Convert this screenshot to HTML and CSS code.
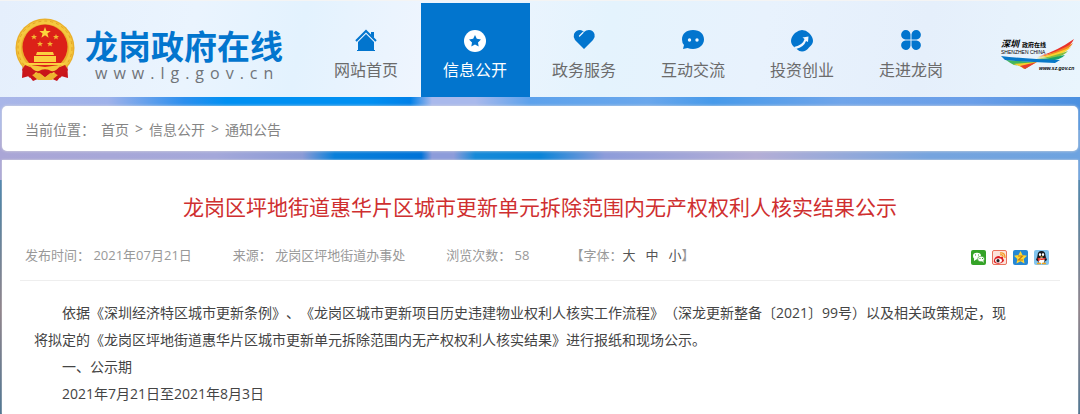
FILE: index.html
```html
<!DOCTYPE html>
<html lang="zh-CN">
  <head>
    <meta charset="UTF-8" />
    <meta name="viewport" content="width=device-width, initial-scale=1.0" />
    <title>龙岗政府在线</title>
    <link rel="stylesheet" href="styles.css">
  </head>
  <body>
    <header class="header">
      <a class="brand" href="#">
        <svg class="emblem" viewBox="0 0 60 64" aria-hidden="true">
          <path d="M8 43 L7 60 L14 58 L18 63 L25 60 L35 60 L42 63 L46 58 L53 60 L52 43 Z" fill="#c8141a" />
          <circle cx="30" cy="30" r="29.500" fill="#eab02c" />
          <circle cx="30" cy="30" r="26" fill="none" stroke="#f5c840" stroke-width="4" />
          <circle cx="30" cy="30" r="27" fill="none" stroke="#e3a224" stroke-width="1" stroke-dasharray="3 3" />
          <circle cx="30" cy="29" r="22.500" fill="#dc2118" />
          <path d="M30 9 l1.500 4 h4.200 l-3.300 2.600 1.200 4.200 -3.600 -2.500 -3.600 2.500 1.200 -4.200 -3.300 -2.600 h4.200z" fill="#fbd43c" />
          <g fill="#f3b832">
            <path id="star" d="M19 16 l.8 2 h2.200 l-1.700 1.400 .6 2.200 -1.900 -1.300 -1.900 1.300 .6 -2.200 -1.700 -1.400 h2.200z" />
            <use href="#star" x="22" />
            <use href="#star" x="6" y="7" />
            <use href="#star" x="16" y="7" />
          </g>
          <path d="M22 34 h16 l1 3 h-18z M19 38 h22 v6 h-22z M10 45 h40 l-2 2 h-36z" fill="#fbd040" />
          <path d="M10 47 q20 9 40 0 l3 5 -8 8 -6 -6 -9 5 -9 -5 -6 6 -8 -8z" fill="#cb171b" />
          <path d="M15 47 q8 1 15 2 q7 -1 15 -2 q-3 7 -9 6 q-6 -4 -12 0 q-6 1 -9 -6z" fill="#f6c63b" />
          <path d="M17 57 l8 -2 5 4 5 -4 8 2 -6 5 h-14z" fill="#edb52f" />
          <path d="M25 55 l5 -3 5 3 -5 4z" fill="#c8141a" />
        </svg>
        <span class="brand-text">
          <strong>龙岗政府在线</strong>
          <span class="domain">www.lg.gov.cn</span>
        </span>
      </a>

      <nav class="nav">
        <a href="#">
          <svg viewBox="0 0 24 24" aria-hidden="true">
            <path d="M2 13 L12 3 L22 13" fill="none" stroke="currentColor" stroke-width="2" />
            <path d="M17 4 h3 v6 l-3 -3z M12 6 L20 14 V22 H21 V23 H3 V22 H4 V14z" />
          </svg>
          网站首页
        </a>
        <a class="active" href="#">
          <svg viewBox="0 0 24 24" aria-hidden="true">
            <circle cx="12" cy="13" r="11" />
            <path d="M12 7 l1.800 3.800 4.200 .6 -3 3 .7 4.200 -3.700 -2 -3.700 2 .7 -4.200 -3 -3 4.200 -.6z" fill="#0275ce" />
          </svg>
          信息公开
        </a>
        <a href="#">
          <svg viewBox="0 0 24 24" aria-hidden="true">
            <path d="M12 21 L3 12 Q1 9 2 6 Q4 2 8 2 Q10 2 12 4 Q14 2 17 2 Q21 2 22.500 6 Q23.500 9 21 12z" />
            <path d="M11 4.500 L7.500 8" stroke="#edf6ff" fill="none" stroke-width="1.300" stroke-linecap="round" />
          </svg>
          政务服务
        </a>
        <a href="#">
          <svg viewBox="0 0 24 24" aria-hidden="true">
            <path d="M12 2 C19 2 23 6 23 11.500 C23 17 18 21 12 21 Q9 21 6.500 20 L2 21 L3 17 Q1 15 1 11.500 C1 6 5 2 12 2z" />
            <circle cx="8.500" cy="12" r="1.700" fill="#eef7ff" />
            <circle cx="16" cy="12" r="1.700" fill="#eef7ff" />
          </svg>
          互动交流
        </a>
        <a href="#">
          <svg viewBox="0 0 24 24" aria-hidden="true">
            <path d="M12 2 Q16 2 19 5 Q23 9 23 13 Q23 16 19 19.500 Q16 23.500 12 23.500 Q9 23.500 6 20.500 Q1 17 1 13 Q1 9 5 5 Q9 2 12 2z" />
            <path d="M6 21 Q14 19 16 13 L18 14 L18.500 8.500 L12.500 9.500 L14.500 11 Q13 17 4 19z" fill="#f0f7ff" />
          </svg>
          投资创业
        </a>
        <a href="#">
          <svg viewBox="0 0 24 24" aria-hidden="true">
            <path d="M11.500 11.500 H6.500 A4.700 4.700 0 1 1 11.500 6.500z M12.500 11.500 V6.500 A4.700 4.700 0 1 1 17.500 11.500z M11.500 12.500 V17.500 A4.700 4.700 0 1 1 6.500 12.500z M12.500 12.500 H17.500 A4.700 4.700 0 1 1 12.500 17.500z" />
          </svg>
          走进龙岗
        </a>
      </nav>

      <a class="sz-link" href="#" aria-label="深圳政府在线">
        <svg viewBox="0 0 76 34" aria-hidden="true">
          <path d="M40 18 Q57 13 74 1 Q71 8 61 13z" fill="#e8322c" />
          <path d="M38 19 Q58 14 73 5 Q70 11 58 16z" fill="#f58220" />
          <path d="M37 20 Q56 16 71 9 Q67 14 55 18z" fill="#fbd32d" />
          <path d="M36 21 Q55 18 68 13 Q64 18 54 20z" fill="#84bf3c" />
          <path d="M36 22 Q52 20 65 17 Q61 22 48 23z" fill="#19a36b" />
          <path d="M6 22 L36 24 L25 31 Q22 29 20 28 Q17 27 14 27 Q10 25 6 22z" fill="#43b65a" />
          <path d="M13 26 L37 24 L24 31 Q21 28 13 26z" fill="#f8cc2c" />
          <path d="M20 28 L37 24 L25 31z" fill="#e93d2d" />
          <path d="M1 18 Q25 21 60 22 L55 25 Q23 24 5 22z" fill="#0878c8" />
          <text class="sz-script" x="1" y="9">深圳</text>
          <text class="sz-small" x="22" y="9">政府在线</text>
          <text class="sz-name" x="1" y="16">SHENZHEN CHINA</text>
          <text class="sz-url" x="39" y="32">www.sz.gov.cn</text>
        </svg>
      </a>
    </header>

    <nav class="crumbs" aria-label="当前位置">
      <span>当前位置：</span>
      <a href="#">首页</a>
      <span>&gt;</span>
      <a href="#">信息公开</a>
      <span>&gt;</span>
      <a href="#">通知公告</a>
    </nav>

    <main class="article">
      <h1>龙岗区坪地街道惠华片区城市更新单元拆除范围内无产权权利人核实结果公示</h1>
      <div class="meta">
        <span>发布时间： 2021年07月21日</span>
        <span>来源： 龙岗区坪地街道办事处</span>
        <span>浏览次数： 58</span>
        <div class="font-size">
          <span>【字体：</span>
          <button type="button">大</button>
          <button type="button">中</button>
          <button type="button">小</button>
          <span>】</span>
        </div>
        <div class="share">
          <a href="#" aria-label="微信">
            <svg viewBox="0 0 15 15">
              <rect width="15" height="15" rx="2" fill="#35a328" />
              <ellipse cx="6" cy="6" rx="4" ry="3.300" fill="#fff" />
              <path d="M3 8 L3 11 L6 9z" fill="#fff" />
              <ellipse cx="10" cy="9" rx="3.400" ry="2.800" fill="#fff" stroke="#35a328" stroke-width=".6" />
              <path d="M11 11 L13 13 L12 10z" fill="#fff" />
              <path d="M4 5h1M7 5h1M8.500 8.500h1M11 8.500h1" stroke="#35a328" />
            </svg>
          </a>
          <a href="#" aria-label="微博">
            <svg viewBox="0 0 15 15">
              <rect x=".5" y=".5" width="14" height="14" rx="1.500" fill="#fce3da" stroke="#e9725c" />
              <path d="M2 10 Q3 6 7 6 Q8 6 8 7 Q12 6 11 9 Q13 10 11 12 Q7 15 3 13 Q1 12 2 10z" fill="#dc1e22" />
              <ellipse cx="6.500" cy="10.500" rx="3.400" ry="2.300" fill="#fff" />
              <circle cx="6" cy="10.700" r="1.600" fill="#222" />
              <path d="M8 3 Q13 2 13 8 M8 5 Q11 4 11 7" fill="none" stroke="#f39b24" stroke-width="1.300" />
            </svg>
          </a>
          <a href="#" aria-label="QQ空间">
            <svg viewBox="0 0 15 15">
              <rect width="15" height="15" rx="2" fill="#2587d5" />
              <path d="M7.500 1 l2 4 4.500 .7 -3.300 3.200 .8 4.600 -4 -2.200 -4 2.200 .8 -4.600 L1 5.700 l4.500 -.7z" fill="#ffd633" />
              <path d="M5 6 H9.500 L5.500 10 H10" fill="none" stroke="#c47d12" stroke-width="1.200" />
            </svg>
          </a>
          <a href="#" aria-label="QQ好友">
            <svg viewBox="0 0 15 15">
              <rect width="15" height="15" rx="2" fill="#83c5ee" />
              <path d="M3.500 6 Q3.500 1 7.500 1 Q11.500 1 11.500 6 L13 10 L11.500 11 L10 13 H5 L3.500 11 L2 10z" fill="#15181e" />
              <ellipse cx="7.500" cy="10.500" rx="3" ry="3" fill="#fff" />
              <ellipse cx="6" cy="4.500" rx="1.100" ry="1.500" fill="#fff" />
              <ellipse cx="9" cy="4.500" rx="1.100" ry="1.500" fill="#fff" />
              <path d="M5.500 6.500 H9.500 L7.500 7.600z" fill="#f8b21b" />
              <path d="M3.500 7.500 Q7.500 9.500 11.500 7.500 V9 Q8 10.500 5.500 9.500 V11 H4z" fill="#e52a20" />
              <path d="M3 13.500h4M8 13.500h4" stroke="#f5a51b" stroke-width="1.500" />
            </svg>
          </a>
        </div>
      </div>
      <div class="content">
        <p>依据《深圳经济特区城市更新条例》、《龙岗区城市更新项目历史违建物业权利人核实工作流程》（深龙更新整备〔2021〕99号）以及相关政策规定，现将拟定的《龙岗区坪地街道惠华片区城市更新单元拆除范围内无产权权利人核实结果》进行报纸和现场公示。</p>
        <p>一、公示期</p>
        <p>2021年7月21日至2021年8月3日</p>
      </div>
    </main>
  </body>
</html>
```
FILE: styles.css
```css
* {
  box-sizing: border-box;
}
body {
  margin: 0;
  min-height: 100vh;
  display: flex;
  flex-direction: column;
  font-family: "Open Sans", "Noto Sans CJK SC", sans-serif;
  font-size: 14px;
  color: #444;
  text-spacing-trim: space-all;
  background:
    linear-gradient(90deg, #a9b6e8 0, #9fb2ea 10%, #2c8fee 17%, #0090f2 21%, #0090f2 34%, #0080e8 38%, #a9b9ec 40%, #a9b9ec 44%, #5da2ec 49%, #6aa7ec 60%, #479aea 66%, #70a5ea 78%, #6a9ee8 90%, #4a90e0 100%) top / 100% 130px no-repeat,
    linear-gradient(90deg, #aaa6d6 0, #a4a8da 20%, #8b9bd6 28%, #0880da 31%, #0073d8 39%, #8d9cda 40%, #8d9cda 42%, #168ad8 44%, #0a84d8 50%, #8d9cda 56%, #b4aed6 70%, #76a4de 86%, #6da3e0 100%) 0 130px / 100% 50px no-repeat,
    linear-gradient(#3f7fd8, #4a93da 25%, #4c7d9e 50%, #8c7e86 75%, #47708e);
}
a {
  color: inherit;
  text-decoration: none;
}
.header {
  display: flex;
  align-items: stretch;
  justify-content: space-between;
  height: 97px;
  padding: 2px 4px 0 15px;
  border-top: 1px solid #f4f4f4;
  background: linear-gradient(100deg, #e5effc 0, #eaf4fe 18%, #e3f2fe 28%, #eff5fe 40%, #e4f3fd 56%, #e8f2fd 70%, #e5effb 85%, #e9f5fd 100%);
}
.brand {
  display: flex;
  align-items: center;
  gap: 10px;
}
.emblem {
  width: 60px;
  height: 64px;
}
.brand-text {
  display: flex;
  flex-direction: column;
  padding-top: 12px;
}
.brand-text strong {
  font-size: 33px;
  line-height: 34px;
  color: #0275ce;
}
.domain {
  padding-left: 10px;
  font-size: 16px;
  line-height: 18px;
  letter-spacing: 6px;
  color: #707479;
}
.nav {
  display: flex;
}
.nav a {
  display: flex;
  flex-direction: column;
  align-items: center;
  gap: 6px;
  width: 109px;
  padding-top: 25px;
  font-size: 16px;
  line-height: 24px;
  color: #6b6b6b;
}
.nav svg {
  width: 24px;
  height: 24px;
  color: #0275ce;
  fill: currentColor;
}
.nav .active {
  background: #0275ce;
  color: #fff;
}
.nav .active svg {
  color: #fff;
}
.sz-link {
  display: flex;
  align-items: center;
  padding: 10px 0 0 6px;
}
.sz-link svg {
  width: 76px;
  height: 34px;
}
.sz-script {
  font-size: 9px;
  font-style: italic;
  font-weight: bold;
}
.sz-small {
  font-size: 6px;
  font-weight: bold;
}
.sz-name,
.sz-url {
  font-family: "Liberation Sans", sans-serif;
  font-size: 5px;
}
.sz-url {
  font-style: italic;
  font-weight: bold;
}
.crumbs {
  display: flex;
  align-items: center;
  gap: 6px;
  height: 45px;
  margin: 9px 2px;
  padding: 0 23px;
  border-radius: 5px;
  background: #fff;
  box-shadow: 0 0 3px #ddd;
  color: #858585;
}
.article {
  flex: 1;
  margin: 0 2px;
  padding: 30px 18px 0;
  background: #fff;
  box-shadow: 0 0 2px #ddd;
}
.article h1 {
  margin: 0;
  font-size: 21px;
  font-weight: normal;
  line-height: 34px;
  text-align: center;
  color: #cf2f30;
}
.meta {
  display: flex;
  align-items: center;
  gap: 41px;
  height: 57px;
  padding: 4px 11px 0 5px;
  border-bottom: 1px solid #eee;
  font-size: 13px;
  color: #999;
}
.font-size {
  display: flex;
}
.font-size button {
  padding: 0;
  margin-right: 10px;
  border: 0;
  background: none;
  font: inherit;
  color: #555;
  cursor: pointer;
}
.font-size button:last-of-type {
  margin-right: 0;
}
.share {
  display: flex;
  gap: 6px;
  margin-left: auto;
  padding-top: 6px;
}
.share svg {
  display: block;
  width: 15px;
  height: 15px;
}
.content {
  padding: 18px 46px 0 14px;
  line-height: 27px;
}
.content p {
  margin: 0;
  text-indent: 2em;
}
```
